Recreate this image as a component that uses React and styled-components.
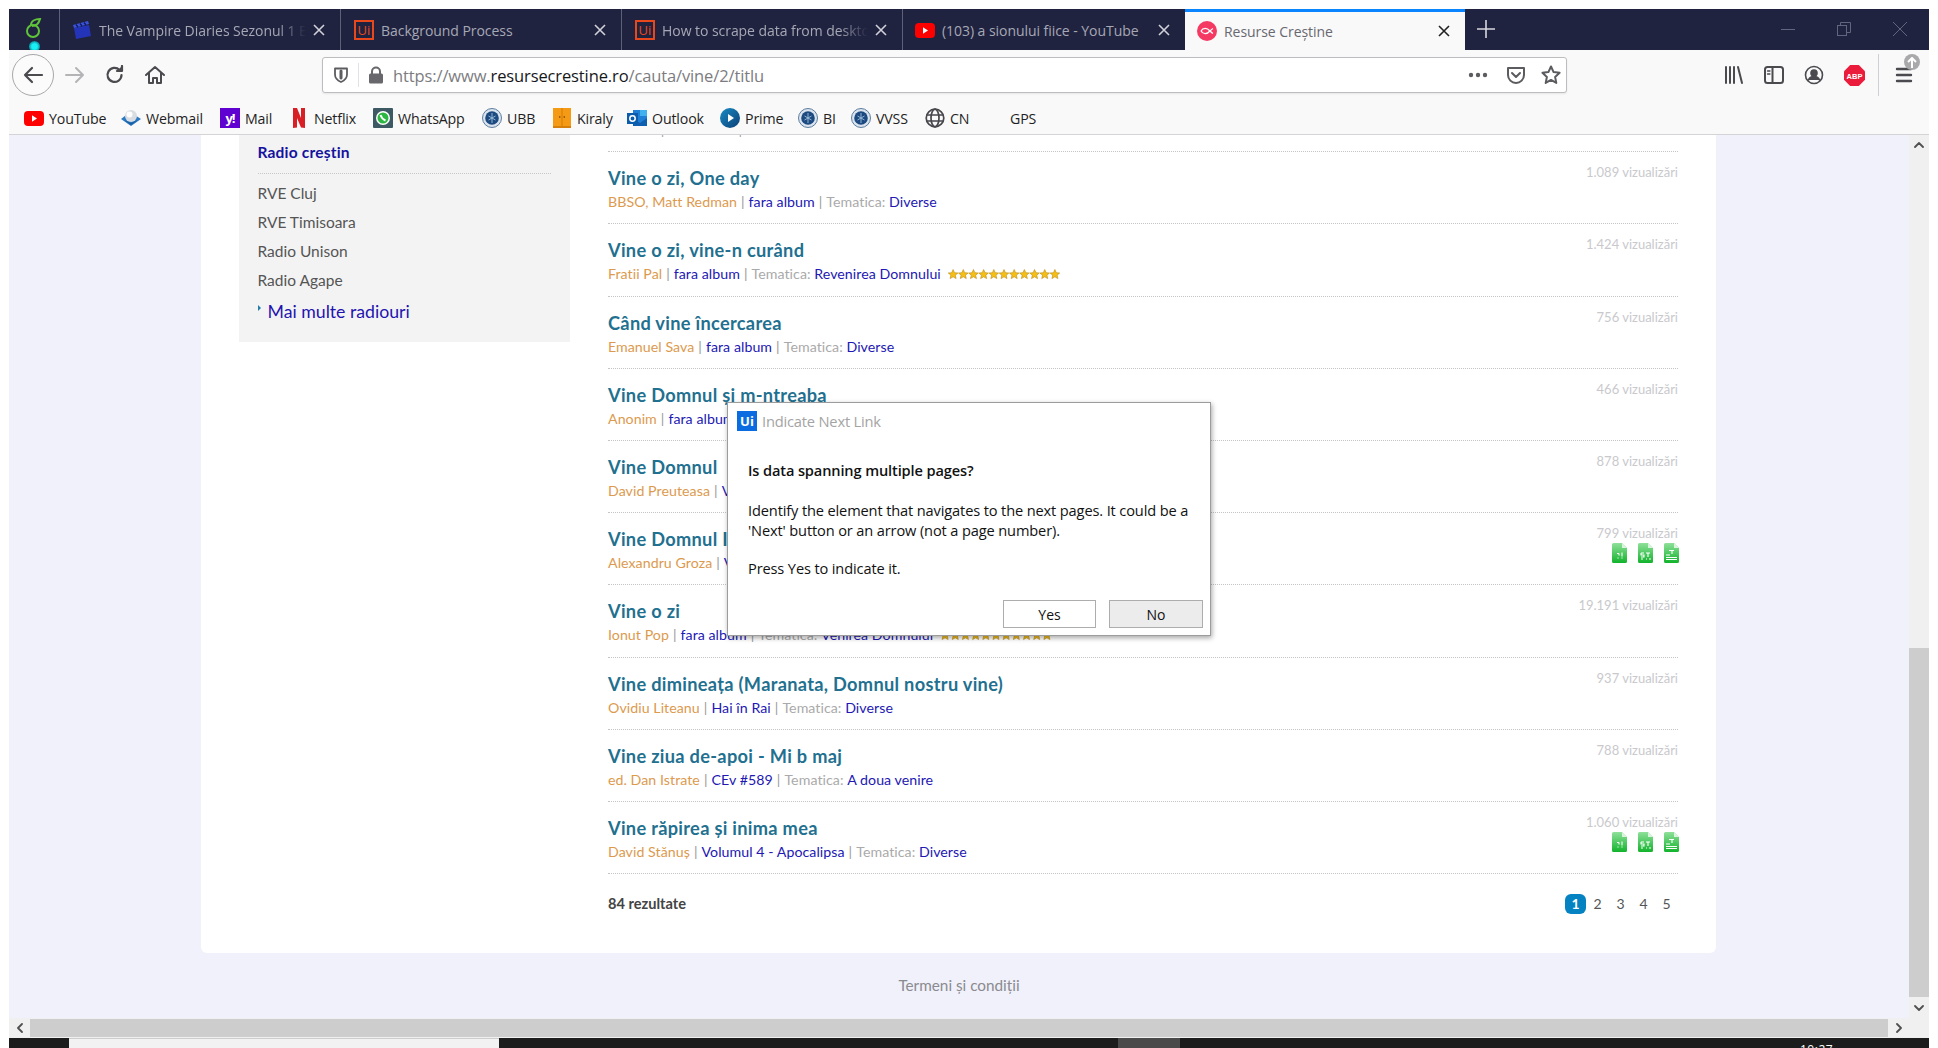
import React from "react";
import styled, { createGlobalStyle } from "styled-components";

const UI = '"Open Sans", "Noto Sans", sans-serif';
const WEB = 'Lato, "Noto Sans", sans-serif';

const Global = createGlobalStyle`
  html, body { margin: 0; padding: 0; background: #fff; overflow: hidden; }
  * { box-sizing: border-box; }
`;

const Screen = styled.div`
  width: 1938px; height: 1048px; padding: 9px 9px 0; background: #fff; overflow: hidden;
  font-family: ${UI};
`;
const Frame = styled.div`display: flex; flex-direction: column; height: 1039px;`;

/* ---------- tab strip ---------- */
const TabStrip = styled.div`display: flex; height: 41px; background: #20233f; flex: none;`;
const PinnedTab = styled.div`
  width: 51px; position: relative; display: flex; justify-content: center; padding-top: 8px;
  border-right: 1px solid #5d6076; flex: none; height: 41px; overflow: hidden;
`;
const Glow = styled.span`
  position: absolute; left: 20px; top: 32px; width: 11px; height: 11px; border-radius: 50%;
  background: radial-gradient(circle, #18f0f5 0 35%, #0e8c9c 70%, #12506a 100%);
`;
const Tab = styled.div`
  width: ${p => p.$w}px; flex: none; height: 41px; display: flex; align-items: center; gap: 7px;
  padding: ${p => (p.$active ? 0 : 1)}px 15px 0 ${p => p.$pad || 12}px;
  background: ${p => (p.$active ? "#f9f9fa" : "transparent")};
  border-top: ${p => (p.$active ? "3px solid #0a84ff" : "none")};
  border-right: ${p => (p.$active || p.$last ? "none" : "1px solid #5d6076")};
`;
const TabTitle = styled.span`
  flex: 1; min-width: 0; white-space: nowrap; overflow: hidden; font-size: 14px; letter-spacing: -0.05px;
  color: ${p => (p.$active ? "#68686f" : "#a6a8b6")};
  ${p => p.$fade && "mask-image: linear-gradient(to right, #000 86%, transparent 100%);"}
`;
const TabClose = styled.svg`
  width: 12px; height: 12px; flex: none; stroke: ${p => (p.$active ? "#222" : "#d0d1d9")}; stroke-width: 1.6; fill: none;
`;
const UiMark = styled.span`
  width: 20px; height: 20px; flex: none; border: 2px solid #e8481c; color: #e8481c;
  display: flex; align-items: center; justify-content: center; font: 500 13px ${UI}; line-height: 1;
`;
const NewTab = styled.svg`width: 18px; height: 18px; margin-left: 12px; margin-top: 11px; stroke: #d6d7de; stroke-width: 1.6; flex: none;`;
const WindowControls = styled.div`
  margin-left: auto; display: flex; align-items: center; gap: 42px; padding-right: 22px; margin-top: -2px;
`;
const WinIcon = styled.svg`width: 14px; height: 14px; stroke: #62657e; fill: none; stroke-width: 1;`;

/* ---------- toolbar ---------- */
const Toolbar = styled.div`
  height: 50px; flex: none; background: #f9f9fa; display: flex; align-items: center; padding-left: 3px; padding-top: 0;
`;
const BackButton = styled.div`
  width: 42px; height: 42px; border-radius: 50%; border: 1px solid #a8a8ab; background: #fbfbfb; margin-right: 1px;
  display: flex; align-items: center; justify-content: center; flex: none;
`;
const ToolButton = styled.div`
  width: 40px; height: 40px; flex: none; display: flex; align-items: center; justify-content: center; position: relative;
`;
const ToolSvg = styled.svg`
  width: ${p => p.$s || 20}px; height: ${p => p.$s || 20}px; fill: none; stroke: ${p => p.$c || "#4a4a4f"}; stroke-width: ${p => p.$sw || 2};
  stroke-linecap: round; stroke-linejoin: round; flex: none;
`;
const UrlBar = styled.div`
  width: 1245px; height: 36px; margin-left: 147px; margin-right: 147px; flex: none; background: #fff;
  border: 1px solid #bdbdbf; border-radius: 3px; display: flex; align-items: center; box-shadow: 0 1px 2px rgba(0,0,0,.08);
`;
const UrlShield = styled.div`
  width: 36px; height: 24px; flex: none; display: flex; justify-content: center; align-items: center;
  border-right: 1px solid #e2e2e4;
`;
const UrlLock = styled.div`width: 34px; flex: none; display: flex; justify-content: center;`;
const UrlText = styled.div`flex: 1; font-size: 16.5px; color: #7c7c80; white-space: nowrap; letter-spacing: -0.12px; padding-top: 1px;`;
const UrlHost = styled.span`color: #17171a;`;
const UrlActions = styled.div`display: flex; align-items: center; gap: 15px; padding-right: 5px;`;
const Pocket = styled.span`display: flex; margin-left: 3px;`;
const ToolSep = styled.div`width: 1px; height: 42px; background: #d0d0d2; margin: 0 5px 0 4px; flex: none;`;
const UpdateBadge = styled.span`
  position: absolute; top: -1px; right: 4px; width: 16px; height: 16px; border-radius: 50%; background: #a9a9ab;
  display: flex; align-items: center; justify-content: center;
`;

/* ---------- bookmarks ---------- */
const Bookmarks = styled.div`
  height: 35px; flex: none; background: #f9f9fa; border-bottom: 1px solid #d4d4d6; padding: 2px 0 0 15px;
  display: flex; align-items: center;
`;
const Bookmark = styled.div`
  width: ${p => p.$w}px; flex: none; display: flex; align-items: center; gap: 5px; font-size: 14.2px; color: #1f1f24;
  letter-spacing: -0.15px; white-space: nowrap;
`;
const BookIcon = styled.span`width: 20px; height: 20px; flex: none; display: flex; align-items: center; justify-content: center;`;
const YahooMark = styled.span`
  width: 20px; height: 20px; background: #5f01d1; color: #fff; font: 700 13px ${UI}; display: flex; align-items: center; justify-content: center; letter-spacing: -1px;
`;

/* ---------- page ---------- */
const Body = styled.div`flex: 1; min-height: 0; display: flex;`;
const Viewport = styled.div`flex: 1; min-width: 0; background: #f0f1fb; position: relative; overflow: hidden;`;
const Scrolled = styled.div`margin-top: -80px;`;
const Card = styled.div`
  width: 1515px; margin-left: 192px; height: 898px; background: #fff; border-radius: 6px;
  display: flex; padding-left: 38px; font-family: ${WEB};
`;
const Sidebar = styled.aside`
  width: 331px; height: 287px; flex: none; background: #f3f3f3; padding: 86px 19px 0 18.5px; margin-right: 38px;
`;
const SideHead = styled.div`
  font-size: 15.5px; font-weight: 700; line-height: 22px; color: #14129f; padding-bottom: 10px; border-bottom: 1px dotted #c8c8c8; margin-bottom: 5px; letter-spacing: .2px;
`;
const SideItem = styled.div`font-size: 15.5px; line-height: 29px; color: #555;`;
const SideMore = styled.div`
  font-size: 17.7px; line-height: 26px; color: #1f14b0; margin-top: 4px; padding-left: 10px; position: relative;
  &::before {
    content: ""; position: absolute; left: 0; top: 6px; border-left: 3px solid #1e7ea8; border-top: 3px solid transparent; border-bottom: 3px solid transparent;
  }
`;
const Results = styled.div`width: 1070px; flex: none; padding-top: 25px;`;
const Row = styled.div`
  height: 72.2px; padding-top: 12px; border-bottom: 1px dotted #c4c4c4; display: flex; justify-content: space-between;
`;
const RowMain = styled.div`min-width: 0;`;
const Title = styled.div`
  font-size: 18.2px; line-height: 24px; font-weight: 700; color: #22708f; margin-top: 2px; white-space: nowrap; letter-spacing: .31px;
`;
const Meta = styled.div`
  font-size: 14.2px; line-height: 22px; margin-top: 1px; color: #aaa; white-space: nowrap; display: flex; align-items: center; letter-spacing: .05px;
`;
const Author = styled.span`color: #dc9a4e;`;
const Link = styled.span`color: #2218b4;`;
const Pipe = styled.span`margin: 0 4px; color: #999;`;
const RowSide = styled.div`display: flex; flex-direction: column; align-items: flex-end;`;
const Views = styled.div`font-size: 13px; line-height: 16px; color: #c9c9cd;`;
const FileIcons = styled.div`display: flex; gap: 11px; margin-top: 2px; margin-right: -1px;`;
const Stars = styled.svg`width: 112px; height: 11px; margin-left: 7px; flex: none;`;
const Summary = styled.div`
  height: 59px; display: flex; align-items: center; justify-content: space-between;
`;
const Total = styled.div`font-size: 14.6px; font-weight: 700; color: #444;`;
const Pager = styled.div`display: flex; align-items: center;`;
const PageNum = styled.span`
  width: ${p => (p.$active ? 21 : 23)}px; height: 20px; display: flex; align-items: center; justify-content: center;
  font-size: 14px; border-radius: 6px; color: ${p => (p.$active ? "#fff" : "#555")}; background: ${p => (p.$active ? "#0582c2" : "transparent")};
  font-weight: ${p => (p.$active ? 700 : 400)};
`;
const Footer = styled.div`
  text-align: center; font: 400 15.3px ${WEB}; color: #8a8a8f; padding-top: 22px; line-height: 20px;
`;

/* ---------- dialog ---------- */
const Dialog = styled.div`
  position: absolute; left: 718px; top: 267px; width: 484px; height: 234px; background: #fff; border: 1px solid #9c9c9c;
  box-shadow: 1px 2px 5px rgba(0,0,0,.35); font-family: ${UI}; display: flex; flex-direction: column;
`;
const DialogHead = styled.div`display: flex; align-items: center; gap: 5px; padding: 8px 0 0 9px;`;
const DialogLogo = styled.span`
  width: 20px; height: 20px; background: #0a6ce0; color: #fff; font: 700 13px ${UI}; display: flex; align-items: center; justify-content: center;
`;
const DialogTitle = styled.span`font-size: 14.7px; color: #a4a4a4; letter-spacing: -0.2px;`;
const DialogBody = styled.div`padding: 0 20px; flex: 1; font-size: 14.6px; line-height: 20px; color: #111; letter-spacing: -0.13px;`;
const DialogQ = styled.div`font-weight: 600; margin: 29px 0 20px;`;
const DialogP = styled.p`margin: 0 0 18px;`;
const DialogButtons = styled.div`display: flex; justify-content: flex-end; gap: 13px; padding: 0 7px 7px 0;`;
const DialogBtn = styled.div`
  width: ${p => p.$w}px; height: 28px; border: 1px solid #adadad; background: ${p => (p.$gray ? "#ececec" : "#fff")};
  display: flex; align-items: center; justify-content: center; font-size: 14px; color: #111;
`;

/* ---------- scrollbars / taskbar ---------- */
const VScroll = styled.div`width: 20px; flex: none; background: #f0f0f0; display: flex; flex-direction: column; align-items: stretch;`;
const ScrollEnd = styled.div`height: 20px; flex: none; display: flex; align-items: center; justify-content: center;`;
const VTrack = styled.div`flex: 1; padding-top: 493px;`;
const VThumb = styled.div`height: 349px; background: #cdcdcd;`;
const HScroll = styled.div`height: 20px; flex: none; background: #f0f0f0; display: flex; align-items: stretch;`;
const HEnd = styled.div`width: 21px; flex: none; display: flex; align-items: center; justify-content: center;`;
const HThumb = styled.div`flex: 1; background: #cdcdcd; margin: 1px 0;`;
const HCorner = styled.div`width: 20px; flex: none; background: #f0f0f0;`;
const Taskbar = styled.div`height: 10px; flex: none; background: #1c1c1c; display: flex; overflow: hidden; position: relative;`;
const TaskActive = styled.div`width: 430px; margin-left: 60px; background: #f2f2f2; border-top: 1px solid #ccc; flex: none;`;
const TaskGray = styled.div`width: 62px; margin-left: 619px; background: #4a4a4a; flex: none;`;
const Clock = styled.div`margin-left: 620px; padding-top: 5px; font-size: 12px; color: #fff; line-height: 14px; letter-spacing: .5px;`;

/* ---------- drawings ---------- */
const X = ({ active }) => (
  <TabClose $active={active} viewBox="0 0 12 12"><path d="M1 1l10 10M11 1L1 11" /></TabClose>
);
const YouTubeIcon = () => (
  <svg width="20" height="15" viewBox="0 0 20 15"><rect width="20" height="15" rx="4" fill="#f00" /><path d="M8 4.2l5 3.3-5 3.3z" fill="#fff" /></svg>
);
const Seal = () => (
  <svg width="20" height="20" viewBox="0 0 20 20">
    <circle cx="10" cy="10" r="9.5" fill="#dbe4ee" stroke="#5d7d9e" />
    <circle cx="10" cy="10" r="6.8" fill="#1c4a80" />
    <path d="M10 5v10M6.5 8l7 4M13.5 8l-7 4" stroke="#9fc0dd" strokeWidth=".9" />
  </svg>
);
const FileIcon = ({ marks }) => (
  <svg width="15" height="20" viewBox="0 0 15 20">
    <defs><linearGradient id="fg" x1="0" y1="0" x2="0" y2="1"><stop offset="0" stopColor="#8fe09a" /><stop offset="1" stopColor="#12b32c" /></linearGradient></defs>
    <path d="M1.5 0H10l5 5v13.5a1.5 1.5 0 0 1-1.5 1.5h-12A1.5 1.5 0 0 1 0 18.500V1.500A1.500 1.500 0 0 1 1.500 0z" fill="url(#fg)" />
    <path d="M10 0l5 5h-5z" fill="#d8f5dc" />
    <path d={marks} stroke="#fff" strokeWidth="1.1" fill="none" />
  </svg>
);
const MARK_A = "M5 10.500h2M7 10.500v2M6 14.500v1M10 9.500v4M10 14.500v1";
const MARK_B = "M3 10h3M3 10v2h3v2H3M8 10h4M10 10v4M3 16h2M8 16h1M11 16h2";
const MARK_C = "M5 7.500h5M8 7v4M2 12h4M2 14.500h11M2 16.500h11";
const StarRow = () => (
  <Stars viewBox="0 0 112 11">
    {Array.from({ length: 11 }).map((_, i) => (
      <path key={i} transform={`translate(${i * 10.18} 0)`}
        d="M5.100.5l1.400 3.200 3.400.3-2.600 2.200.8 3.400-3-1.800-3 1.800.8-3.400L.300 4l3.400-.3z"
        fill="#f5bf16" stroke="#b98a12" strokeWidth=".6" />
    ))}
  </Stars>
);

const rows = [
  { t: "Vine ceva", a: "Anonim", al: "fara album", th: "Diverse", v: "1.100" },
  { t: "Vine o zi, One day", a: "BBSO, Matt Redman", al: "fara album", th: "Diverse", v: "1.089" },
  { t: "Vine o zi, vine-n curând", a: "Fratii Pal", al: "fara album", th: "Revenirea Domnului", v: "1.424", stars: true },
  { t: "Când vine încercarea", a: "Emanuel Sava", al: "fara album", th: "Diverse", v: "756" },
  { t: "Vine Domnul și m-ntreaba", a: "Anonim", al: "fara album", th: "Diverse", v: "466" },
  { t: "Vine Domnul", a: "David Preuteasa", al: "Volumul 1", th: "Diverse", v: "878" },
  { t: "Vine Domnul Isus", a: "Alexandru Groza", al: "Volumul 2", th: "Diverse", v: "799", files: true },
  { t: "Vine o zi", a: "Ionut Pop", al: "fara album", th: "Venirea Domnului", v: "19.191", stars: true },
  { t: "Vine dimineața (Maranata, Domnul nostru vine)", a: "Ovidiu Liteanu", al: "Hai în Rai", th: "Diverse", v: "937" },
  { t: "Vine ziua de-apoi - Mi b maj", a: "ed. Dan Istrate", al: "CEv #589", th: "A doua venire", v: "788" },
  { t: "Vine răpirea și inima mea", a: "David Stănuș", al: "Volumul 4 - Apocalipsa", th: "Diverse", v: "1.060", files: true },
];

export default function App() {
  return (
    <Screen>
      <Global />
      <Frame>
        <TabStrip>
          <PinnedTab>
            <svg width="20" height="22" viewBox="0 0 20 22" fill="none" stroke="#5fc43a" strokeWidth="2">
              <circle cx="9" cy="14" r="6" />
              <path d="M7 8c0-4 4-6 9-6-1 4-4 7-8 7" />
            </svg>
            <Glow />
          </PinnedTab>
          <Tab $w={281}>
            <svg width="20" height="20" viewBox="0 0 20 20" style={{ flex: "none" }}>
              <path d="M2 8l15-3 2 11-15 3z" fill="#2334b8" />
              <path d="M1 5l15-4 1 3-15 4z" fill="#3a55d8" />
              <path d="M4 4.500l2 2.500M8 3.500l2 2.500M12 2.500l2 2.500" stroke="#10186a" strokeWidth="1.400" />
            </svg>
            <TabTitle $fade>The Vampire Diaries Sezonul 1 Episodul</TabTitle>
            <X />
          </Tab>
          <Tab $w={281} $pad={13}>
            <UiMark>Ui</UiMark>
            <TabTitle>Background Process</TabTitle>
            <X />
          </Tab>
          <Tab $w={281} $pad={13}>
            <UiMark>Ui</UiMark>
            <TabTitle $fade>How to scrape data from desktop application</TabTitle>
            <X />
          </Tab>
          <Tab $w={282} $pad={12} $last>
            <YouTubeIcon />
            <TabTitle>(103) a sionului fiice - YouTube</TabTitle>
            <X />
          </Tab>
          <Tab $w={280} $active $pad={12}>
            <svg width="20" height="20" viewBox="0 0 20 20" style={{ flex: "none" }}>
              <circle cx="10" cy="10" r="10" fill="#f43a63" />
              <path d="M4 10c2-3.500 6-3.500 9 0 1 1 2 2 3 2.500M4 10c2 3.500 6 3.500 9 0 1-1 2-2 3-2.500" fill="none" stroke="#fff" strokeWidth="1.300" />
            </svg>
            <TabTitle $active>Resurse Creștine</TabTitle>
            <X active />
          </Tab>
          <NewTab viewBox="0 0 18 18"><path d="M9 0v18M0 9h18" /></NewTab>
          <WindowControls>
            <WinIcon viewBox="0 0 14 14"><path d="M0 7.500h14" /></WinIcon>
            <WinIcon viewBox="0 0 14 14"><rect x=".5" y="3.500" width="9" height="10" /><path d="M3.500 3.500V.5h10v10h-4" /></WinIcon>
            <WinIcon viewBox="0 0 14 14"><path d="M0 0l14 14M14 0L0 14" /></WinIcon>
          </WindowControls>
        </TabStrip>

        <Toolbar>
          <BackButton>
            <ToolSvg $s={22} viewBox="0 0 22 22" $c="#4a4a4f" $sw={2.200}><path d="M20 11H3M10 4l-7 7 7 7" /></ToolSvg>
          </BackButton>
          <ToolButton><ToolSvg $s={22} viewBox="0 0 22 22" $c="#b4b4b6" $sw={2}><path d="M2 11h17M12 4l7 7-7 7" /></ToolSvg></ToolButton>
          <ToolButton><ToolSvg viewBox="0 0 20 20" $c="#4a4a4f" $sw={2.200}><path d="M16.500 10a7 7 0 1 1-2-5" /><path d="M17 1v5h-5" fill="#4a4a4f" /></ToolSvg></ToolButton>
          <ToolButton><ToolSvg viewBox="0 0 20 20" $c="#4a4a4f" $sw={2}><path d="M1 10l9-8 9 8M4 8v10h4v-5h4v5h4V8" /></ToolSvg></ToolButton>
          <UrlBar>
            <UrlShield>
              <ToolSvg $s={18} viewBox="0 0 18 18" $c="#5c5c61" $sw={1.800}><path d="M3 2.500h12v6c0 3.500-2.500 6-6 7.500-3.500-1.500-6-4-6-7.500z" /><path d="M9 5v7" strokeWidth="3" /></ToolSvg>
            </UrlShield>
            <UrlLock>
              <svg width="16" height="18" viewBox="0 0 16 18"><path d="M4 8V5.500a4 4 0 0 1 8 0V8" fill="none" stroke="#68686c" strokeWidth="2" /><rect x="1" y="7.500" width="14" height="10" rx="1.500" fill="#68686c" /></svg>
            </UrlLock>
            <UrlText>https://www.<UrlHost>resursecrestine.ro</UrlHost>/cauta/vine/2/titlu</UrlText>
            <UrlActions>
              <svg width="20" height="6" viewBox="0 0 20 6" fill="#5b5b60"><circle cx="3" cy="3" r="2.200" /><circle cx="10" cy="3" r="2.200" /><circle cx="17" cy="3" r="2.200" /></svg>
              <Pocket><ToolSvg viewBox="0 0 20 20" $c="#5b5b60" $sw={2}><path d="M2 3h16v7a8 8 0 0 1-16 0z" /><path d="M6 8l4 4 4-4" /></ToolSvg></Pocket>
              <ToolSvg viewBox="0 0 20 20" $c="#5b5b60" $sw={2}><path d="M10 1.500l2.600 5.600 6 .7-4.500 4.100 1.200 6-5.300-3-5.300 3 1.200-6L1.400 7.800l6-.7z" /></ToolSvg>
            </UrlActions>
          </UrlBar>
          <ToolButton><ToolSvg viewBox="0 0 20 20" $c="#4a4a4f" $sw={2}><path d="M2 2v16M6 2v16M10 2v16M14 2l4 16" /></ToolSvg></ToolButton>
          <ToolButton><ToolSvg viewBox="0 0 20 20" $c="#4a4a4f" $sw={2}><rect x="1" y="2" width="18" height="16" rx="2.500" /><path d="M8.500 2v16" /><path d="M3.500 6h2.500M3.500 9h2.500" strokeWidth="1.300" /></ToolSvg></ToolButton>
          <ToolButton><ToolSvg viewBox="0 0 20 20" $c="#4a4a4f" $sw={1.600}><circle cx="10" cy="10" r="8.500" /><circle cx="10" cy="8" r="3" fill="#4a4a4f" /><path d="M4.500 15c1-3 3-3.500 5.500-3.500s4.500.5 5.500 3.500" fill="#4a4a4f" /></ToolSvg></ToolButton>
          <ToolButton>
            <svg width="21" height="21" viewBox="0 0 21 21">
              <path d="M6.200 0h8.600L21 6.200v8.600L14.800 21H6.200L0 14.800V6.200z" fill="#eb1c3b" />
              <text x="10.500" y="13.500" textAnchor="middle" fontSize="7.500" fontWeight="700" fill="#fff" fontFamily="Liberation Sans, sans-serif">ABP</text>
            </svg>
          </ToolButton>
          <ToolSep />
          <ToolButton>
            <ToolSvg $s={18} viewBox="0 0 18 18" $c="#4a4a4f" $sw={2.400}><path d="M2 3h14M2 9h14M2 15h14" /></ToolSvg>
            <UpdateBadge>
              <svg width="10" height="11" viewBox="0 0 10 11" fill="none" stroke="#fff" strokeWidth="2"><path d="M5 11V1M1 5l4-4 4 4" /></svg>
            </UpdateBadge>
          </ToolButton>
        </Toolbar>

        <Bookmarks>
          <Bookmark $w={97}><BookIcon><YouTubeIcon /></BookIcon>YouTube</Bookmark>
          <Bookmark $w={99}>
            <BookIcon>
              <svg width="20" height="20" viewBox="0 0 20 20">
                <path d="M0 11l9-7 11 7-10 7z" fill="#2b79c2" />
                <circle cx="10" cy="8" r="6" fill="#d9dde2" /><circle cx="8.500" cy="6.500" r="3" fill="#fff" />
                <path d="M3 12l7 5 7-5-7 3z" fill="#1a5e9f" />
              </svg>
            </BookIcon>Webmail
          </Bookmark>
          <Bookmark $w={69}><YahooMark>y!</YahooMark>Mail</Bookmark>
          <Bookmark $w={84}>
            <BookIcon><svg width="12" height="20" viewBox="0 0 12 20"><path d="M0 0h4l4 10V0h4v20q-2 0-4-.4L4 10v9.500L0 20z" fill="#d81f26" /></svg></BookIcon>Netflix
          </Bookmark>
          <Bookmark $w={109}>
            <BookIcon>
              <svg width="20" height="20" viewBox="0 0 20 20">
                <rect width="20" height="20" rx="1" fill="#3d5a64" />
                <circle cx="10" cy="10" r="7" fill="#fff" /><circle cx="10" cy="10" r="5.500" fill="#2bb741" />
                <path d="M7.500 7c1 3 2.500 4.500 5 5.500" stroke="#fff" strokeWidth="2" fill="none" />
              </svg>
            </BookIcon>WhatsApp
          </Bookmark>
          <Bookmark $w={70}><BookIcon><Seal /></BookIcon>UBB</Bookmark>
          <Bookmark $w={75}>
            <BookIcon>
              <svg width="18" height="20" viewBox="0 0 16 20" preserveAspectRatio="none"><rect width="16" height="18" fill="#f59a14" /><rect y="18" width="16" height="2" fill="#d6800b" /><path d="M8 0v18" stroke="#d6800b" /><path d="M6 8v2M10 8v2" stroke="#8a5200" /></svg>
            </BookIcon>Kiraly
          </Bookmark>
          <Bookmark $w={93}>
            <BookIcon>
              <svg width="20" height="20" viewBox="0 0 20 20">
                <rect x="6" y="2" width="14" height="16" fill="#1f7fd6" /><path d="M6 10l7 5 7-5v8H6z" fill="#0f5fb0" /><rect x="13" y="2" width="7" height="6" fill="#40b0ee" />
                <rect y="5" width="11" height="11" fill="#0b5cad" /><circle cx="5.500" cy="10.500" r="2.700" fill="none" stroke="#fff" strokeWidth="1.500" />
              </svg>
            </BookIcon>Outlook
          </Bookmark>
          <Bookmark $w={78}>
            <BookIcon>
              <svg width="20" height="20" viewBox="0 0 20 20"><defs><linearGradient id="pr" x1="0" y1="0" x2="1" y2="1"><stop offset="0" stopColor="#1a8cc4" /><stop offset="1" stopColor="#0b3f76" /></linearGradient></defs><circle cx="10" cy="10" r="10" fill="url(#pr)" /><path d="M8 6l6 4-6 4z" fill="#fff" /></svg>
            </BookIcon>Prime
          </Bookmark>
          <Bookmark $w={53}><BookIcon><Seal /></BookIcon>BI</Bookmark>
          <Bookmark $w={74}><BookIcon><Seal /></BookIcon>VVSS</Bookmark>
          <Bookmark $w={85}>
            <BookIcon>
              <svg width="20" height="20" viewBox="0 0 20 20" fill="none" stroke="#47474c" strokeWidth="1.700"><circle cx="10" cy="10" r="8.800" /><ellipse cx="10" cy="10" rx="4" ry="8.800" /><path d="M1.500 7h17M1.500 13h17" /></svg>
            </BookIcon>CN
          </Bookmark>
          <Bookmark $w={60}>GPS</Bookmark>
        </Bookmarks>

        <Body>
          <Viewport>
            <Scrolled>
              <Card>
                <Sidebar>
                  <SideHead>Radio creștin</SideHead>
                  <SideItem>RVE Cluj</SideItem>
                  <SideItem>RVE Timisoara</SideItem>
                  <SideItem>Radio Unison</SideItem>
                  <SideItem>Radio Agape</SideItem>
                  <SideMore>Mai multe radiouri</SideMore>
                </Sidebar>
                <Results>
                  {rows.map(r => (
                    <Row key={r.t}>
                      <RowMain>
                        <Title>{r.t}</Title>
                        <Meta>
                          <Author>{r.a}</Author><Pipe>|</Pipe>
                          <Link>{r.al}</Link><Pipe>|</Pipe>
                          Tematica:&nbsp;<Link>{r.th}</Link>
                          {r.stars && <StarRow />}
                        </Meta>
                      </RowMain>
                      <RowSide>
                        <Views>{r.v} vizualizări</Views>
                        {r.files && (
                          <FileIcons>
                            <FileIcon marks={MARK_A} />
                            <FileIcon marks={MARK_B} />
                            <FileIcon marks={MARK_C} />
                          </FileIcons>
                        )}
                      </RowSide>
                    </Row>
                  ))}
                  <Summary>
                    <Total>84 rezultate</Total>
                    <Pager>
                      <PageNum $active>1</PageNum>
                      <PageNum>2</PageNum>
                      <PageNum>3</PageNum>
                      <PageNum>4</PageNum>
                      <PageNum>5</PageNum>
                    </Pager>
                  </Summary>
                </Results>
              </Card>
              <Footer>Termeni și condiții</Footer>
            </Scrolled>
            <Dialog>
              <DialogHead>
                <DialogLogo>Ui</DialogLogo>
                <DialogTitle>Indicate Next Link</DialogTitle>
              </DialogHead>
              <DialogBody>
                <DialogQ>Is data spanning multiple pages?</DialogQ>
                <DialogP>Identify the element that navigates to the next pages. It could be a<br />'Next' button or an arrow (not a page number).</DialogP>
                <DialogP>Press Yes to indicate it.</DialogP>
              </DialogBody>
              <DialogButtons>
                <DialogBtn $w={93}>Yes</DialogBtn>
                <DialogBtn $w={94} $gray>No</DialogBtn>
              </DialogButtons>
            </Dialog>
          </Viewport>
          <VScroll>
            <ScrollEnd><ToolSvg $s={10} viewBox="0 0 10 10" $c="#505050" $sw={1.800}><path d="M1 7l4-4 4 4" /></ToolSvg></ScrollEnd>
            <VTrack><VThumb /></VTrack>
            <ScrollEnd><ToolSvg $s={10} viewBox="0 0 10 10" $c="#505050" $sw={1.800}><path d="M1 3l4 4 4-4" /></ToolSvg></ScrollEnd>
          </VScroll>
        </Body>
        <HScroll>
          <HEnd><ToolSvg $s={10} viewBox="0 0 10 10" $c="#505050" $sw={1.800}><path d="M7 1L3 5l4 4" /></ToolSvg></HEnd>
          <HThumb />
          <HEnd><ToolSvg $s={10} viewBox="0 0 10 10" $c="#505050" $sw={1.800}><path d="M3 1l4 4-4 4" /></ToolSvg></HEnd>
          <HCorner />
        </HScroll>
        <Taskbar>
          <TaskActive />
          <TaskGray />
          <Clock>10:27</Clock>
        </Taskbar>
      </Frame>
    </Screen>
  );
}
